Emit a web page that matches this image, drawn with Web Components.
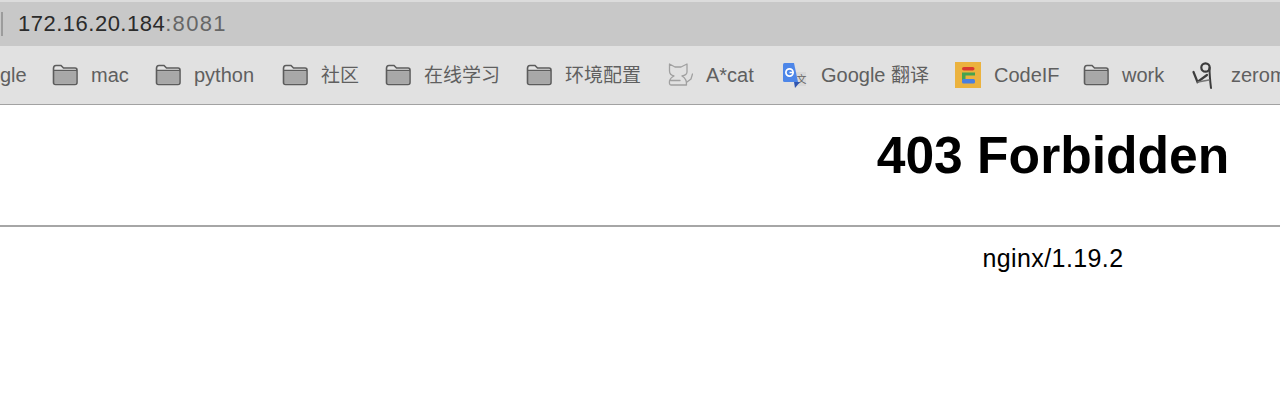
<!DOCTYPE html>
<html>
<head>
<meta charset="utf-8">
<title>403 Forbidden</title>
<style>
    html, body { margin: 0; padding: 0; height: 100%; overflow: hidden; background: #fff; }
    body { font-family: "Liberation Sans", "Noto Sans CJK SC", sans-serif; }
</style>
</head>
<body>
<browser-address host="172.16.20.184" port=":8081"></browser-address>
<bookmark-bar>
    <bookmark-item label="gle" icon="none" size="26"></bookmark-item>
    <bookmark-item label="mac" icon="folder" size="38"></bookmark-item>
    <bookmark-item label="python" icon="folder" size="62"></bookmark-item>
    <bookmark-item label="社区" icon="folder" size="38"></bookmark-item>
    <bookmark-item label="在线学习" icon="folder" size="76"></bookmark-item>
    <bookmark-item label="环境配置" icon="folder" size="76"></bookmark-item>
    <bookmark-item label="A*cat" icon="cat" size="50"></bookmark-item>
    <bookmark-item label="Google 翻译" icon="translate" size="108"></bookmark-item>
    <bookmark-item label="CodeIF" icon="codeif" size="63"></bookmark-item>
    <bookmark-item label="work" icon="folder" size="44"></bookmark-item>
    <bookmark-item label="zerom" icon="zero" size="60"></bookmark-item>
</bookmark-bar>
<error-page heading="403 Forbidden" server="nginx/1.19.2"></error-page>

<script>
const ICONS = {
    none: '',
    folder: `<svg width="26" height="22" viewBox="0 0 26 22">
        <path d="M1.5 4.5 Q1.5 1.5 4 1.5 H9 L11.5 4 H23 Q25 4 25 6 V18.5 Q25 20.5 23 20.5 H3.5 Q1.5 20.5 1.5 18.5 Z" fill="#e4e4e4"/>
        <path d="M2 7.5 H24 V18.5 Q24 19.5 23 19.5 H3 Q2 19.5 2 18.5 Z" fill="#a8a8a8"/>
        <path d="M1.5 4.5 Q1.5 1.5 4 1.5 H9 L11.5 4 H23 Q25 4 25 6 V18.5 Q25 20.5 23 20.5 H3.5 Q1.5 20.5 1.5 18.5 Z M1.5 6.5 H25" fill="none" stroke="#5c5c5c" stroke-width="1.6"/>
    </svg>`,
    cat: `<svg width="26" height="26" viewBox="0 0 26 26" fill="none" stroke="#a0a0a0" stroke-width="1.3" stroke-linejoin="round" stroke-linecap="round">
        <path d="M2.5 2 L8 5 H14 L20 2 V10 Q20 13 15 14 Q20 17 19.5 23 H4 Q2 23 2.5 19 Q3.5 15.5 7 14 Q2.5 13 2.5 9 Z"/>
        <path d="M20 20 L24 17 L25.5 12"/>
        <path d="M3.5 18.5 H13"/>
    </svg>`,
    translate: `<svg width="26" height="26" viewBox="0 0 26 26">
        <path d="M14 10 H24 V24 H14 Z" fill="#d8d8d8"/>
        <text x="14.5" y="21" font-size="10" fill="#666" font-family="Noto Sans CJK SC, sans-serif">文</text>
        <path d="M1 2.5 Q1 1 2.5 1 H12 L16 20 H2.5 Q1 20 1 18.5 Z" fill="#4d86e8"/>
        <path d="M12 20 H18 L13 26 Z" fill="#2f55b0"/>
        <circle cx="7.5" cy="10.5" r="3.6" fill="none" stroke="#fff" stroke-width="1.7"/>
        <path d="M7.5 10.5 H11.5" stroke="#fff" stroke-width="1.5"/>
    </svg>`,
    codeif: `<svg width="26" height="26" viewBox="0 0 26 26">
        <rect width="26" height="26" fill="#ebb23e"/>
        <rect x="7" y="5" width="12.5" height="3.6" rx="1.8" fill="#d9392f"/>
        <path d="M7 10.5 H20 V13.5 H10.5 V18 H7 Z" fill="#45a34f"/>
        <rect x="7" y="17" width="13" height="4.5" rx="1.5" fill="#4a7fe0"/>
    </svg>`,
    zero: `<svg width="26" height="28" viewBox="0 0 26 28" fill="none" stroke="#3c3c3c" stroke-linecap="round">
        <circle cx="13.5" cy="6.5" r="4.2" stroke-width="2.2"/>
        <path d="M17.5 7 Q17.5 15 19 27" stroke-width="2"/>
        <path d="M1.5 11 L5.5 21 L15 14" stroke-width="2.2"/>
        <path d="M6 21 L17 19" stroke-width="1.6" stroke="#777"/>
    </svg>`
};

class BrowserAddress extends HTMLElement {
    constructor() {
        super();
        this.attachShadow({ mode: 'open' });
    }

    connectedCallback() {
        this.shadowRoot.innerHTML = `
        <style>
            :host {
                display: flex;
                align-items: center;
                box-sizing: border-box;
                height: 46px;
                border-top: 2px solid #dcdcdc;
                background: #c8c8c8;
                font-size: 22px;
                letter-spacing: 0.5px;
                color: #2b2b2b;
            }
            .sep { width: 2px; height: 24px; margin: 0 15px 0 1px; background: #9c9c9c; }
            .port { color: #666; letter-spacing: 1.3px; }
        </style>
        <span class="sep"></span>
        <span>${this.getAttribute('host')}</span><span class="port">${this.getAttribute('port')}</span>
        `;
    }
}

class BookmarkBar extends HTMLElement {
    constructor() {
        super();
        this.attachShadow({ mode: 'open' });
    }

    connectedCallback() {
        this.shadowRoot.innerHTML = `
        <style>
            :host {
                display: flex;
                align-items: center;
                gap: 26px;
                box-sizing: border-box;
                height: 59px;
                overflow: hidden;
                background: #e1e1e1;
                border-bottom: 1px solid #a2a2a2;
                white-space: nowrap;
            }
        </style>
        <slot></slot>
        `;
    }
}

class BookmarkItem extends HTMLElement {
    constructor() {
        super();
        this.attachShadow({ mode: 'open' });
    }

    connectedCallback() {
        const icon = this.getAttribute('icon');
        // CJK glyphs run a bit smaller than the latin ones in the bar
        const label = this.getAttribute('label').replace(/[\u4e00-\u9fff]+/g, m => `<span class="cjk">${m}</span>`);
        this.shadowRoot.innerHTML = `
        <style>
            :host {
                display: flex;
                flex: none;
                align-items: center;
                gap: 13px;
                font-size: 20px;
                color: #5f5f5f;
            }
            .icon { display: flex; width: 26px; justify-content: center; }
            .label { display: block; width: ${this.getAttribute('size')}px; line-height: 24px; }
            .cjk { font-size: 19px; }
        </style>
        ${icon === 'none' ? '' : `<span class="icon">${ICONS[icon]}</span>`}
        <span class="label">${label}</span>
        `;
    }
}

class ErrorPage extends HTMLElement {
    constructor() {
        super();
        this.attachShadow({ mode: 'open' });
    }

    connectedCallback() {
        this.shadowRoot.innerHTML = `
        <style>
            :host { display: block; width: 2106px; color: #000; }
            h1 {
                margin: 0;
                padding: 20px 0 40px;
                font-size: 51.6px;
                line-height: 60px;
                font-weight: bold;
                text-align: center;
            }
            hr { margin: 0; height: 2px; border: 0; background: #a6a6a6; }
            p {
                margin: 0;
                padding-top: 17px;
                font-size: 25px;
                letter-spacing: 0.4px;
                line-height: 28px;
                text-align: center;
            }
        </style>
        <h1>${this.getAttribute('heading')}</h1>
        <hr>
        <p>${this.getAttribute('server')}</p>
        `;
    }
}

customElements.define('browser-address', BrowserAddress);
customElements.define('bookmark-bar', BookmarkBar);
customElements.define('bookmark-item', BookmarkItem);
customElements.define('error-page', ErrorPage);
</script>
</body>
</html>
